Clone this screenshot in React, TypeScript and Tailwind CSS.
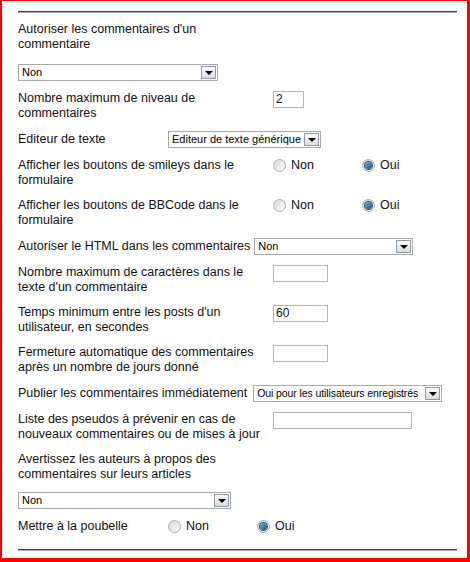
import React from 'react';

function Select({ value, width, textSize = 'text-[11px]' }: { value: string; width: string; textSize?: string }) {
  return (
    <div className={`${width} flex h-[17px] shrink-0 items-center justify-between border border-[#a9a9a9] bg-white pl-[3px] pr-[1px]`}>
      <span className={`${textSize} overflow-hidden whitespace-nowrap leading-none text-black`}>{value}</span>
      <span className="flex h-[13px] w-[15px] shrink-0 items-center justify-center border border-[#8e99a6] bg-gradient-to-b from-[#fbfbfb] to-[#d9dbdf]">
        <span className="h-0 w-0 border-x-[4px] border-t-[4px] border-x-transparent border-t-black" />
      </span>
    </div>
  );
}

function TextInput({ value = '', width }: { value?: string; width: string }) {
  return (
    <div className={`${width} h-[17px] border border-[#b5b5b5] bg-white pl-[2px] text-[12px] leading-[15px]`}>
      {value}
    </div>
  );
}

function Radio({ checked }: { checked?: boolean }) {
  return (
    <span className="flex h-[13px] w-[13px] items-center justify-center rounded-full border border-[#ababab] bg-gradient-to-br from-[#dcdcdc] to-[#fafafa]">
      {checked && (
        <span className="h-[7px] w-[7px] rounded-full bg-gradient-to-br from-[#6fb3dd] to-[#15507c] ring-1 ring-[#1d4f73]" />
      )}
    </span>
  );
}

function RadioPair({ value }: { value: 'Non' | 'Oui' }) {
  return (
    <div className="flex h-[15px] self-start">
      <label className="flex w-[89px] items-center gap-[5px]">
        <Radio checked={value === 'Non'} />
        <span>Non</span>
      </label>
      <label className="flex items-center gap-[5px]">
        <Radio checked={value === 'Oui'} />
        <span>Oui</span>
      </label>
    </div>
  );
}

function Rule() {
  return (
    <div className="w-[439px]">
      <div className="h-px bg-[#3c3c3c]" />
      <div className="h-px bg-[#b0b0b0]" />
    </div>
  );
}

export default function App() {
  return (
    <div
      className="h-[562px] w-[470px] border-b-[4px] border-l-[2px] border-r-[3px] border-t border-[#ff0000] bg-white pl-[16px] pt-[10px] text-[12.5px] leading-[15px] text-[#111]"
      style={{ fontFamily: '"Liberation Sans", Arial, sans-serif' }}
    >
      <Rule />
      <div className="mt-[9px] flex flex-col gap-[10px]">
        <div className="flex flex-col gap-[12px]">
          <div className="w-[245px]">Autoriser les commentaires d'un commentaire</div>
          <Select value="Non" width="w-[200px]" />
        </div>

        <div className="flex">
          <div className="w-[255px]">Nombre maximum de niveau de commentaires</div>
          <TextInput value="2" width="w-[31px]" />
        </div>

        <div className="flex items-center">
          <div className="w-[150px]">Editeur de texte</div>
          <Select value="Editeur de texte générique" width="w-[153px]" />
        </div>

        <div className="flex">
          <div className="w-[255px]">Afficher les boutons de smileys dans le formulaire</div>
          <RadioPair value="Oui" />
        </div>

        <div className="flex">
          <div className="w-[255px]">Afficher les boutons de BBCode dans le formulaire</div>
          <RadioPair value="Oui" />
        </div>

        <div className="flex items-center gap-[4px]">
          <div>Autoriser le HTML dans les commentaires</div>
          <Select value="Non" width="w-[159px]" />
        </div>

        <div className="flex">
          <div className="w-[255px]">Nombre maximum de caractères dans le texte d'un commentaire</div>
          <TextInput width="w-[55px]" />
        </div>

        <div className="flex">
          <div className="w-[255px]">Temps minimum entre les posts d'un utilisateur, en secondes</div>
          <TextInput value="60" width="w-[55px]" />
        </div>

        <div className="flex">
          <div className="w-[255px]">Fermeture automatique des commentaires après un nombre de jours donné</div>
          <TextInput width="w-[55px]" />
        </div>

        <div className="flex items-center gap-[6px]">
          <div className="whitespace-nowrap">Publier les commentaires immédiatement</div>
          <Select value="Oui pour les utilisateurs enregistrés" width="w-[189px]" textSize="text-[10.5px] tracking-[-0.1px]" />
        </div>

        <div className="flex">
          <div className="w-[255px]">Liste des pseudos à prévenir en cas de nouveaux commentaires ou de mises à jour</div>
          <TextInput width="w-[139px]" />
        </div>

        <div className="flex flex-col gap-[10px]">
          <div className="w-[245px]">Avertissez les auteurs à propos des commentaires sur leurs articles</div>
          <Select value="Non" width="w-[213px]" />
        </div>

        <div className="flex">
          <div className="w-[150px]">Mettre à la poubelle</div>
          <RadioPair value="Oui" />
        </div>
      </div>
      <div className="mt-[15px]">
        <Rule />
      </div>
    </div>
  );
}
